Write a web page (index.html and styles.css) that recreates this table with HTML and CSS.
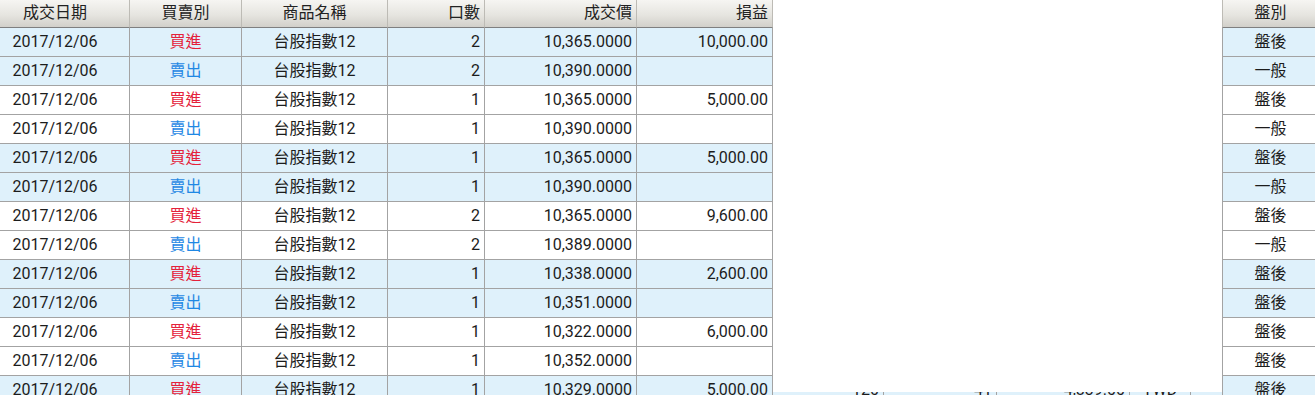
FILE: index.html
```html
<!DOCTYPE html>
<html lang="zh-Hant">
<head>
<meta charset="utf-8">
<title>成交明細</title>
<link rel="stylesheet" href="styles.css">
</head>
<body>
<div class="grid-wrap">
  <div class="row head">
    <div class="c date">成交日期</div>
    <div class="c mid">買賣別</div>
    <div class="c mid">商品名稱</div>
    <div class="c num">口數</div>
    <div class="c num">成交價</div>
    <div class="c num">損益</div>
    <div class="c num">手續費</div>
    <div class="c num">交易稅</div>
    <div class="c num">淨損益</div>
    <div class="c mid">幣別</div>
    <div class="c mid"></div>
    <div class="c mid">盤別</div>
  </div>
  <div class="body">
    <div class="row"><div class="c date">2017/12/06</div><div class="c mid buy">買進</div><div class="c mid">台股指數12</div><div class="c num">2</div><div class="c num">10,365.0000</div><div class="c num">10,000.00</div><div class="c num">240</div><div class="c num">83</div><div class="c num">9,677.00</div><div class="c mid">TWD</div><div class="c mid"></div><div class="c mid">盤後</div></div>
    <div class="row"><div class="c date">2017/12/06</div><div class="c mid sell">賣出</div><div class="c mid">台股指數12</div><div class="c num">2</div><div class="c num">10,390.0000</div><div class="c num"></div><div class="c num">240</div><div class="c num">83</div><div class="c num"></div><div class="c mid">TWD</div><div class="c mid"></div><div class="c mid">一般</div></div>
    <div class="row"><div class="c date">2017/12/06</div><div class="c mid buy">買進</div><div class="c mid">台股指數12</div><div class="c num">1</div><div class="c num">10,365.0000</div><div class="c num">5,000.00</div><div class="c num">120</div><div class="c num">41</div><div class="c num">4,839.00</div><div class="c mid">TWD</div><div class="c mid"></div><div class="c mid">盤後</div></div>
    <div class="row"><div class="c date">2017/12/06</div><div class="c mid sell">賣出</div><div class="c mid">台股指數12</div><div class="c num">1</div><div class="c num">10,390.0000</div><div class="c num"></div><div class="c num">120</div><div class="c num">42</div><div class="c num"></div><div class="c mid">TWD</div><div class="c mid"></div><div class="c mid">一般</div></div>
    <div class="row"><div class="c date">2017/12/06</div><div class="c mid buy">買進</div><div class="c mid">台股指數12</div><div class="c num">1</div><div class="c num">10,365.0000</div><div class="c num">5,000.00</div><div class="c num">120</div><div class="c num">41</div><div class="c num">4,839.00</div><div class="c mid">TWD</div><div class="c mid"></div><div class="c mid">盤後</div></div>
    <div class="row"><div class="c date">2017/12/06</div><div class="c mid sell">賣出</div><div class="c mid">台股指數12</div><div class="c num">1</div><div class="c num">10,390.0000</div><div class="c num"></div><div class="c num">120</div><div class="c num">42</div><div class="c num"></div><div class="c mid">TWD</div><div class="c mid"></div><div class="c mid">一般</div></div>
    <div class="row"><div class="c date">2017/12/06</div><div class="c mid buy">買進</div><div class="c mid">台股指數12</div><div class="c num">2</div><div class="c num">10,365.0000</div><div class="c num">9,600.00</div><div class="c num">240</div><div class="c num">83</div><div class="c num">9,277.00</div><div class="c mid">TWD</div><div class="c mid"></div><div class="c mid">盤後</div></div>
    <div class="row"><div class="c date">2017/12/06</div><div class="c mid sell">賣出</div><div class="c mid">台股指數12</div><div class="c num">2</div><div class="c num">10,389.0000</div><div class="c num"></div><div class="c num">240</div><div class="c num">83</div><div class="c num"></div><div class="c mid">TWD</div><div class="c mid"></div><div class="c mid">一般</div></div>
    <div class="row"><div class="c date">2017/12/06</div><div class="c mid buy">買進</div><div class="c mid">台股指數12</div><div class="c num">1</div><div class="c num">10,338.0000</div><div class="c num">2,600.00</div><div class="c num">120</div><div class="c num">41</div><div class="c num">2,439.00</div><div class="c mid">TWD</div><div class="c mid"></div><div class="c mid">盤後</div></div>
    <div class="row"><div class="c date">2017/12/06</div><div class="c mid sell">賣出</div><div class="c mid">台股指數12</div><div class="c num">1</div><div class="c num">10,351.0000</div><div class="c num"></div><div class="c num">120</div><div class="c num">41</div><div class="c num"></div><div class="c mid">TWD</div><div class="c mid"></div><div class="c mid">盤後</div></div>
    <div class="row"><div class="c date">2017/12/06</div><div class="c mid buy">買進</div><div class="c mid">台股指數12</div><div class="c num">1</div><div class="c num">10,322.0000</div><div class="c num">6,000.00</div><div class="c num">120</div><div class="c num">41</div><div class="c num">5,839.00</div><div class="c mid">TWD</div><div class="c mid"></div><div class="c mid">盤後</div></div>
    <div class="row"><div class="c date">2017/12/06</div><div class="c mid sell">賣出</div><div class="c mid">台股指數12</div><div class="c num">1</div><div class="c num">10,352.0000</div><div class="c num"></div><div class="c num">120</div><div class="c num">41</div><div class="c num"></div><div class="c mid">TWD</div><div class="c mid"></div><div class="c mid">盤後</div></div>
    <div class="row"><div class="c date">2017/12/06</div><div class="c mid buy">買進</div><div class="c mid">台股指數12</div><div class="c num">1</div><div class="c num">10,329.0000</div><div class="c num">5,000.00</div><div class="c num">120</div><div class="c num">41</div><div class="c num">4,839.00</div><div class="c mid">TWD</div><div class="c mid"></div><div class="c mid">盤後</div></div>
  </div>
  <div class="overlay"></div>
</div>
</body>
</html>
```

FILE: styles.css
```css
html, body {
  margin: 0;
  padding: 0;
  background: #ffffff;
  overflow: hidden;
}

.grid-wrap {
  position: relative;
  width: 1315px;
  height: 395px;
  overflow: hidden;
  font-family: Roboto, "Noto Sans CJK TC", sans-serif;
  font-size: 16px;
  color: #1c1c1c;
}

.row {
  display: grid;
  grid-template-columns: 130px 112px 146px 97px 152px 136px 111px 113px 133px 61px 32px 96px;
  width: 1319px;
}

.c {
  box-sizing: border-box;
  height: 29px;
  line-height: 28px;
  border-right: 1px solid #a3a3a3;
  border-bottom: 1px solid #a3a3a3;
  white-space: nowrap;
  overflow: hidden;
}

.head .c {
  height: 28px;
  line-height: 26px;
  background: linear-gradient(#f6f5f2, #e6e5e0 55%, #d2d0ca);
  border-right: 1px solid #bdbbb5;
  border-bottom: 1px solid #7f7f7f;
  color: #222222;
}

.body .row:nth-child(4n+1),
.body .row:nth-child(4n+2) {
  background: #dff1fb;
}

.date {
  text-align: center;
  padding-right: 19px;
}

.mid {
  text-align: center;
}

.num {
  text-align: right;
  padding-right: 4px;
}

.buy {
  color: #e4213a;
}

.sell {
  color: #1f88e4;
}

.overlay {
  position: absolute;
  left: 773px;
  top: 0;
  width: 449px;
  height: 392px;
  background: #ffffff;
}
```
